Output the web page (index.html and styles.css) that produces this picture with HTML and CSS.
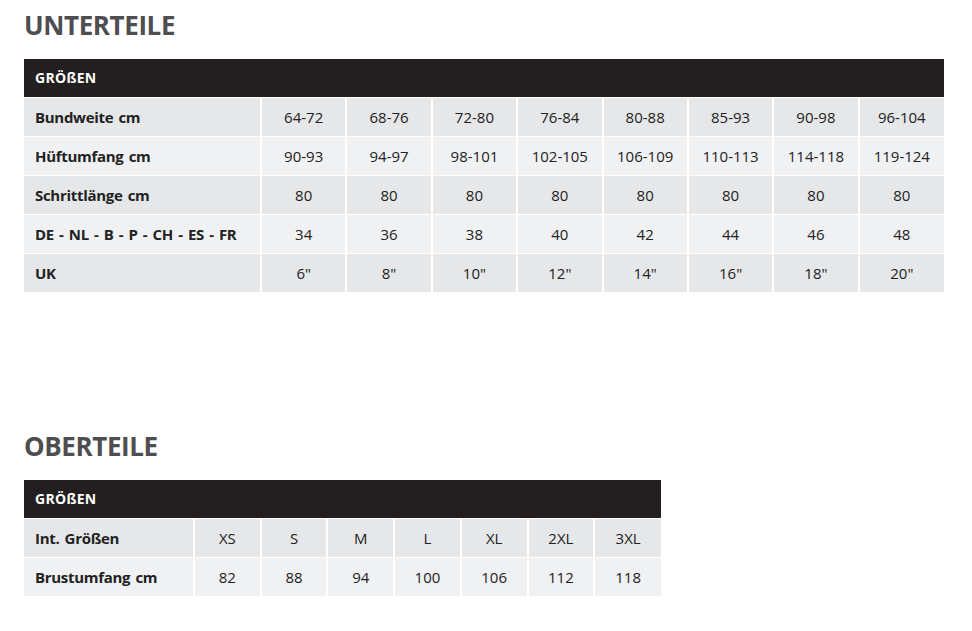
FILE: index.html
```html
<!DOCTYPE html>
<html lang="de">
<head>
<meta charset="utf-8">
<title>Größentabelle</title>
<link rel="stylesheet" href="styles.css">
</head>
<body>
<section class="section first">
  <h2 class="title">UNTERTEILE</h2>
  <table class="size-table wide">
    <colgroup><col class="label-col"><col span="8"></colgroup>
    <thead>
      <tr><th colspan="9">GRÖßEN</th></tr>
    </thead>
    <tbody>
      <tr><td>Bundweite cm</td><td>64-72</td><td>68-76</td><td>72-80</td><td>76-84</td><td>80-88</td><td>85-93</td><td>90-98</td><td>96-104</td></tr>
      <tr><td>Hüftumfang cm</td><td>90-93</td><td>94-97</td><td>98-101</td><td>102-105</td><td>106-109</td><td>110-113</td><td>114-118</td><td>119-124</td></tr>
      <tr><td>Schrittlänge cm</td><td>80</td><td>80</td><td>80</td><td>80</td><td>80</td><td>80</td><td>80</td><td>80</td></tr>
      <tr><td>DE - NL - B - P - CH - ES - FR</td><td>34</td><td>36</td><td>38</td><td>40</td><td>42</td><td>44</td><td>46</td><td>48</td></tr>
      <tr><td>UK</td><td>6"</td><td>8"</td><td>10"</td><td>12"</td><td>14"</td><td>16"</td><td>18"</td><td>20"</td></tr>
    </tbody>
  </table>
</section>
<section class="section second">
  <h2 class="title">OBERTEILE</h2>
  <table class="size-table narrow">
    <colgroup><col class="label-col"><col span="7"></colgroup>
    <thead>
      <tr><th colspan="8">GRÖßEN</th></tr>
    </thead>
    <tbody>
      <tr><td>Int. Größen</td><td>XS</td><td>S</td><td>M</td><td>L</td><td>XL</td><td>2XL</td><td>3XL</td></tr>
      <tr><td>Brustumfang cm</td><td>82</td><td>88</td><td>94</td><td>100</td><td>106</td><td>112</td><td>118</td></tr>
    </tbody>
  </table>
</section>
</body>
</html>
```

FILE: styles.css
```css
* { box-sizing: border-box; }
html, body { background: #fff; }
body {
  margin: 0;
  padding: 10px 28px 0 24px;
  font-family: "Open Sans", "Noto Sans", sans-serif;
  color: #222;
}
.title {
  margin: 0;
  font-size: 26px;
  line-height: 30px;
  font-weight: 700;
  color: #4e4e50;
  letter-spacing: -0.4px;
}
.section.first .title { margin-bottom: 19px; }
.section.second { margin-top: 139px; }
.section.second .title { margin-bottom: 19px; }

.size-table {
  border-collapse: collapse;
  table-layout: fixed;
}
.size-table.wide { width: 920px; }
.size-table.narrow { width: 637px; }
.size-table.wide .label-col { width: 237px; }
.size-table.narrow .label-col { width: 170px; }
.size-table th {
  background: #231f20;
  color: #fff;
  text-align: left;
  font-size: 14px;
  font-weight: 700;
  height: 38px;
  padding: 0 0 0 11px;
  letter-spacing: 0.3px;
}
.size-table td {
  height: 39px;
  padding: 0;
  font-size: 15px;
  text-align: center;
  border-left: 2px solid #fff;
  border-top: 1px solid #fff;
  color: #222;
  white-space: nowrap;
}
.size-table td:first-child {
  text-align: left;
  font-weight: 700;
  padding-left: 11px;
  border-left: 0;
  letter-spacing: -0.3px;
  word-spacing: 1.6px;
}
.size-table tbody tr:nth-child(odd) td { background: #e6e7e9; }
.size-table tbody tr:nth-child(even) td { background: #f0f1f3; }
```
